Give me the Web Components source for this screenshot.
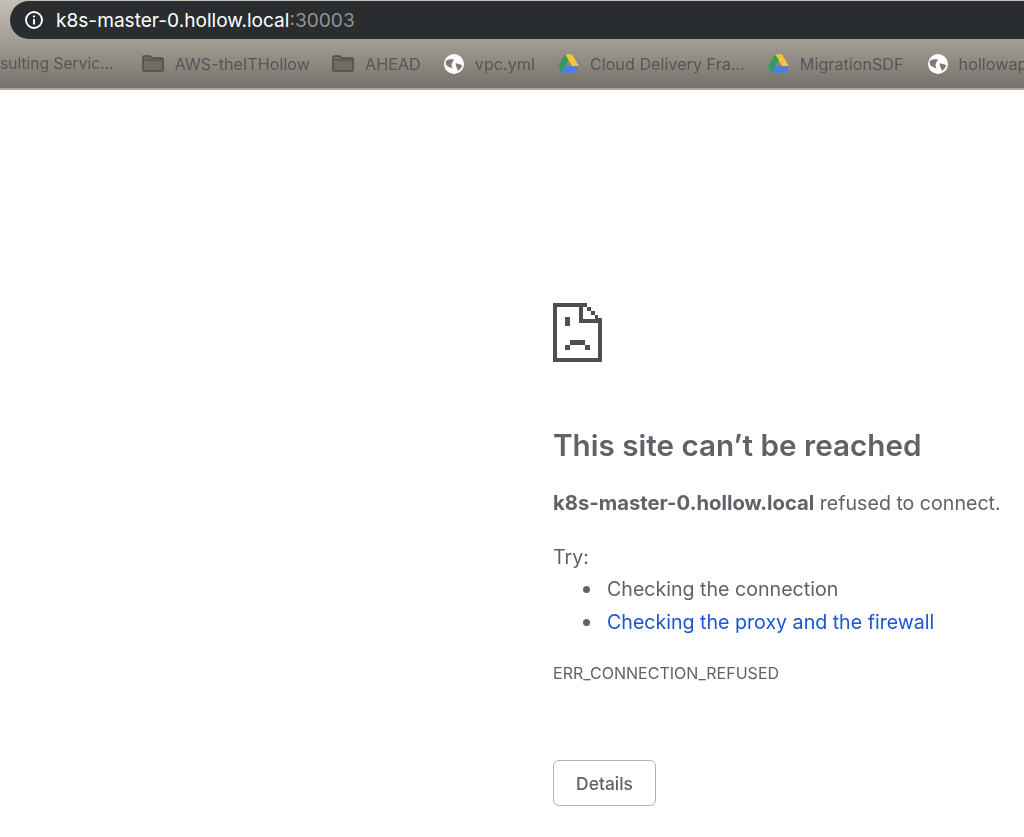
<!DOCTYPE html>
<html><head><meta charset="utf-8"><title>This site can't be reached</title>
<style>
html,body{margin:0;padding:0;background:#fff;height:100%}
body{width:1024px;height:837px;overflow:hidden;font-family:Inter,Roboto,"Liberation Sans",sans-serif}
</style></head><body>
<template id="t-header"><style>
:host{display:block;height:90px;box-sizing:border-box;overflow:hidden;background:linear-gradient(#c4c0b8 0,#a19d93 42px,#9a958b 50px,#75716a 88px);border-bottom:2px solid #a5a5a2;padding:1px 0 0 10px}
</style><slot name="address"></slot><slot name="bookmarks"></slot></template>
<template id="t-address"><style>
:host{display:flex;align-items:center;height:38px;box-sizing:border-box;margin-right:-20px;background:#292d30;border-radius:19px 0 0 19px;padding-left:14px;color:#fff;font:19.1px/38px Inter,Roboto,sans-serif}
svg{width:20px;height:20px;margin-right:12px;flex:none}
.port{color:#8f9295}
</style><svg viewBox="0 0 20 20"><circle cx="10" cy="10" r="8" fill="none" stroke="#fff" stroke-width="1.9"/><rect x="9" y="9" width="2" height="5.5" fill="#fff"/><rect x="9" y="5.5" width="2" height="2" fill="#fff"/></svg><span><slot></slot></span><span class="port"><slot name="port"></slot></span></template>
<template id="t-bar"><style>
:host{display:flex;align-items:center;height:49px;margin-left:-10px;white-space:nowrap;overflow:hidden;filter:blur(.35px)}
</style><slot></slot></template>
<template id="t-mark"><style>
:host{display:flex;align-items:center;flex:none;gap:11px;color:#55565a;font:16.2px/20px Inter,Roboto,sans-serif}
:host([small]){font-size:15.6px}
svg{display:block;flex:none}
</style><span id="i" style="display:contents"></span><span><slot></slot></span></template>
<template id="t-sad"><style>
:host{display:block;width:49px;height:59px}
svg{display:block}
</style><svg width="49" height="59" viewBox="0 0 49 59" fill="#4f4f4f" shape-rendering="crispEdges">
<rect x="0" y="0" width="4" height="59"/><rect x="0" y="0" width="34" height="4"/><rect x="0" y="55" width="49" height="4"/><rect x="45" y="15" width="4" height="44"/>
<rect x="26" y="4" width="4" height="16"/><rect x="26" y="16" width="23" height="4"/>
<rect x="34" y="4" width="4" height="4"/><rect x="38" y="8" width="4" height="4"/><rect x="42" y="12" width="3" height="4"/>
<rect x="12" y="14" width="5" height="9"/><rect x="17" y="37" width="15" height="5"/><rect x="12" y="42" width="5" height="5"/><rect x="32" y="42" width="5" height="5"/>
</svg></template>
<template id="t-main"><style>
:host{display:block;box-sizing:border-box;padding:213px 0 0 553px;color:#5f6368;font:19.6px/32px Inter,Roboto,sans-serif;filter:blur(.3px)}
h1{margin:63px 0 0;font-size:29.66px;line-height:40px;font-weight:600;letter-spacing:0}
p{margin:22px 0 0;white-space:nowrap}
b{font-weight:700;font-size:20.25px}
.try{margin-top:22px}
ul{margin:0;padding:0 0 0 54px;list-style:none}
li{position:relative;height:32.5px;line-height:32px;white-space:nowrap}
li::before{content:"";position:absolute;left:-24px;top:13px;width:7px;height:7px;border-radius:50%;background:#5f6368}
.code{margin:25px 0 0;font-size:16.05px;line-height:20px}
.link{color:#1a56d6}
button{display:block;margin:77px 0 0;width:103px;height:46px;box-sizing:border-box;background:#fff;border:1.5px solid #aeb1b5;border-radius:6px;color:#5f6368;font:500 17.4px Inter,Roboto,sans-serif;padding:0}
</style><sad-file></sad-file><h1>This site can’t be reached</h1>
<p><b>k8s-master-0.hollow.local</b> refused to connect.</p>
<p class="try">Try:</p>
<ul><li>Checking the connection</li><li class="link">Checking the proxy and the firewall</li></ul>
<p class="code">ERR_CONNECTION_REFUSED</p>
<button>Details</button></template>
<script>
const ICONS={
folder:'<svg width="22" height="17" viewBox="0 0 22 17" style="margin-left:MLpx"><path d="M1 2.2Q1 1 2.2 1H8L10 3H20Q21 3 21 4V15Q21 16 20 16H2Q1 16 1 15Z" fill="#6f6c65" stroke="#4e4d4a" stroke-width="1.5"/><path d="M1 5H21" stroke="#4e4d4a" stroke-width="1"/></svg>',
globe:'<svg width="20" height="20" viewBox="0 0 20 20" style="margin-left:MLpx"><circle cx="10" cy="10" r="10" fill="#fff"/><path d="M1.6 7.2C4 5 7.2 4.8 10 5.6C9.2 7.4 8 8.6 7.6 10.2C7.3 11.6 8 13 8.6 14.4C6 13.8 3.6 12.6 2 10.8Z" fill="#7f7b73"/><path d="M11.6 9.2C13.6 9.4 16.2 10 18.2 11.2C17.6 13.6 16 15.8 13.6 17C13.8 15.4 13 14.6 12.4 13.2C11.9 12 11.6 10.6 11.6 9.2Z" fill="#7f7b73"/></svg>',
drive:'<svg width="21" height="19" viewBox="0 0 22 20" style="margin-left:MLpx"><path d="M7.4 0.3H14.6L22 13H14.8Z" fill="#f4c534"/><path d="M7.4 0.3L11 6.6L3.6 19.7L0 13.2Z" fill="#2f9e5b"/><path d="M3.6 19.7L7.3 13H22L18.4 19.7Z" fill="#4a7fe6"/></svg>'};
function def(n,t,fn){customElements.define(n,class extends HTMLElement{connectedCallback(){if(this.shadowRoot)return;const s=this.attachShadow({mode:'open'});s.appendChild(document.getElementById(t).content.cloneNode(true));fn&&fn(this,s)}})}
def('browser-header','t-header');
def('address-pill','t-address');
def('bookmark-bar','t-bar');
def('book-mark','t-mark',(h,s)=>{const k=h.getAttribute('icon'),m=h.getAttribute('ml')||0;if(k)s.getElementById('i').innerHTML=ICONS[k].replace('ML',m);else s.getElementById('i').remove()});
def('sad-file','t-sad');
def('error-main','t-main');
</script>
<browser-header>
<address-pill slot="address">k8s-master-0.hollow.local<span slot="port">:30003</span></address-pill>
<bookmark-bar slot="bookmarks">
<book-mark small>sulting Servic...</book-mark>
<book-mark icon="folder" ml="28">AWS-theITHollow</book-mark>
<book-mark icon="folder" ml="22">AHEAD</book-mark>
<book-mark icon="globe" ml="23">vpc.yml</book-mark>
<book-mark icon="drive" ml="23">Cloud Delivery Fra...</book-mark>
<book-mark icon="drive" ml="23">MigrationSDF</book-mark>
<book-mark icon="globe" ml="24">hollowapp</book-mark>
</bookmark-bar>
</browser-header>
<error-main></error-main>
</body></html>
